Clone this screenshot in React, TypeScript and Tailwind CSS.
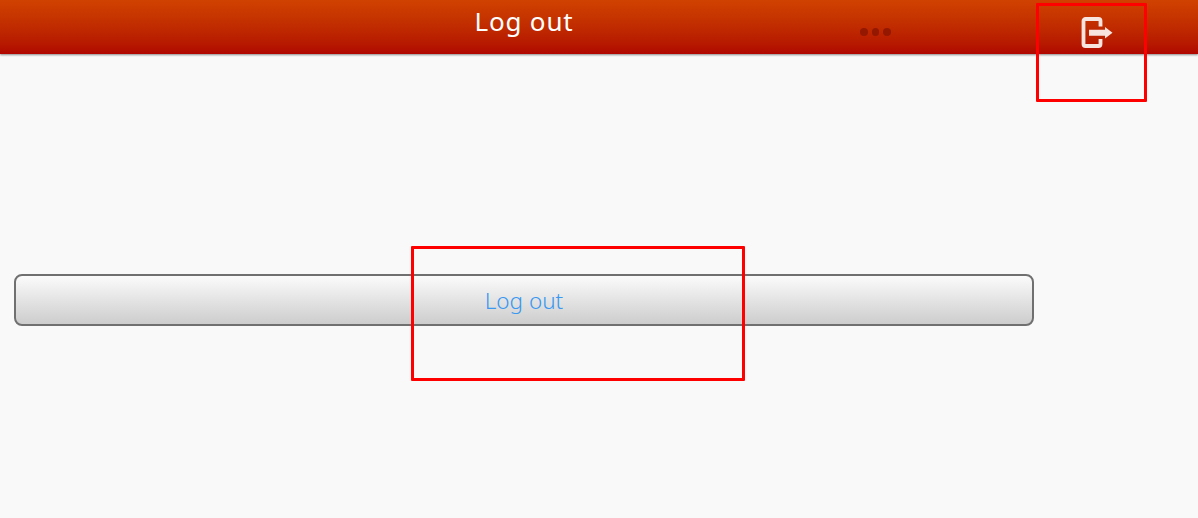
export default function App() {
  return (
    <div className="relative h-[518px] w-[1198px] overflow-hidden bg-[#f9f9f9] font-['Noto_Sans',sans-serif]">
      <header className="relative flex h-[54px] items-start bg-gradient-to-b from-[#d04200] to-[#b00600] shadow-[0_1px_2px_rgba(0,0,0,0.45)]">
        <h1 className="w-[1048px] pt-[4px] text-center text-[26px] leading-[34px] font-normal tracking-[0.8px] text-white">
          Log out
        </h1>
        <div className="absolute top-[28px] left-[860px] flex gap-[4px]">
          <span className="h-[7.500px] w-[7.500px] rounded-full bg-[#941800]" />
          <span className="h-[7.500px] w-[7.500px] rounded-full bg-[#941800]" />
          <span className="h-[7.500px] w-[7.500px] rounded-full bg-[#941800]" />
        </div>
        <svg
          className="mt-[17px] ml-[33px]"
          width="32"
          height="31"
          viewBox="0 0 32 31"
          fill="none"
        >
          <path
            d="M19.5 9.500V4a2 2 0 0 0-2-2H4.500A2 2 0 0 0 2.500 4V27A2 2 0 0 0 4.500 29H17.500a2 2 0 0 0 2-2V22"
            stroke="#f8e4df"
            strokeWidth="3.800"
          />
          <path d="M8 12.800H24V10L31.500 15.800L24 21.500V18.800H8Z" fill="#f8e4df" />
        </svg>
      </header>
      <main className="px-[14px] pt-[220px]">
        <button
          type="button"
          className="flex h-[52px] w-[1020px] items-center justify-center rounded-[8px] border-2 border-[#707070] bg-gradient-to-b from-[#fbfbfb] to-[#cdcdcd] pt-[1px] text-[22.500px] font-light text-[#3a98f0]"
        >
          Log out
        </button>
      </main>
      <div className="absolute top-[3px] left-[1036px] h-[99px] w-[111px] rounded-[1px] border-[3px] border-[#ff0000]" />
      <div className="absolute top-[246px] left-[411px] h-[135px] w-[334px] rounded-[1px] border-[3px] border-[#ff0000]" />
    </div>
  );
}
